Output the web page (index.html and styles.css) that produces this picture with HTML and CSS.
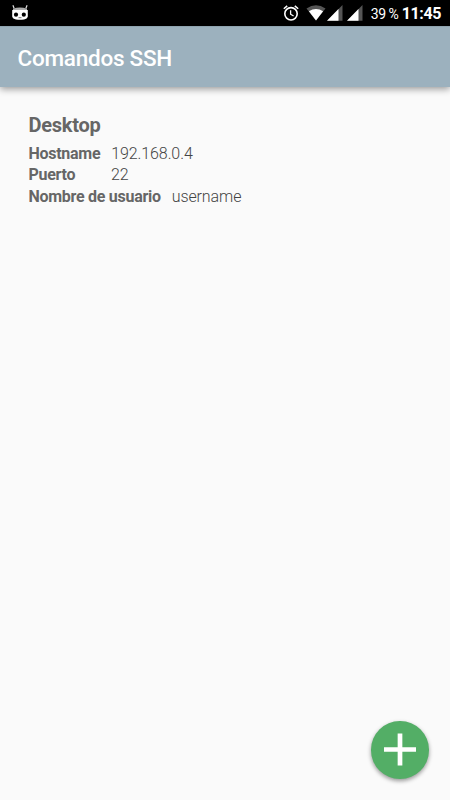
FILE: index.html
```html
<!DOCTYPE html>
<html lang="es">
    <head>
        <meta charset="UTF-8">
        <meta name="viewport" content="width=device-width, initial-scale=1.0">
        <title>Comandos SSH</title>
        <link rel="stylesheet" href="styles.css">
    </head>
    <body>
        <div class="statusbar">
            <svg class="robot" width="18" height="16" viewBox="0 0 18 16">
                <path d="M1.9 0.3L3.2 3.5M16.1 0.3L14.8 3.5" stroke="#ddd" stroke-width="1.2"/>
                <path d="M2 3.8Q9 1.2 16 3.8V6H2z" fill="#aaa"/>
                <path d="M1.2 5H16.8V11.5Q16.3 14 13 14.4Q9 15 5 14.4Q1.7 14 1.2 11.5z" fill="#fff"/>
                <circle cx="5" cy="9.7" r="2.1"/>
                <circle cx="12.8" cy="9.7" r="2.1"/>
                <path d="M7.5 12.7H10.5" stroke="#777" stroke-width="1"/>
            </svg>
            <div class="status-right">
                <svg class="alarm" width="16" height="16" viewBox="0 0 16 16" fill="none" stroke="#fff">
                    <circle cx="8" cy="8.8" r="6.2" stroke-width="1.6"/>
                    <path d="M0.8 3.8L4.2 0.9M15.2 3.8L11.8 0.9" stroke-width="1.5"/>
                    <path d="M7.6 5.2V9.2L10.6 11" stroke-width="1.3"/>
                </svg>
                <svg class="wifi" width="20" height="16" viewBox="0 0 20 16">
                    <path d="M0.5 3.5Q10 -3 19.5 3.5L10 15.5z" fill="#555"/>
                    <path d="M2.9 6.3Q10 1.8 17.1 6.3L10 15.5z" fill="#fff"/>
                </svg>
                <svg class="signal" width="16" height="16" viewBox="0 0 16 16">
                    <path d="M0 15.7L15.5 0V15.7z" fill="#555"/>
                    <path d="M0 15.7L11.5 4V15.7z" fill="#fff"/>
                </svg>
                <svg class="signal" width="16" height="16" viewBox="0 0 16 16">
                    <path d="M0 15.7L15.5 0V15.7z" fill="#555"/>
                    <path d="M0 15.7L11.5 4V15.7z" fill="#fff"/>
                </svg>
                <span class="battery">39 %</span>
                <span class="clock">11:45</span>
            </div>
        </div>
        <header class="toolbar">
            <h1>Comandos SSH</h1>
        </header>
        <main class="card">
            <h2>Desktop</h2>
            <div class="row">
                <span class="label">Hostname</span>
                <span class="value">192.168.0.4</span>
            </div>
            <div class="row">
                <span class="label">Puerto</span>
                <span class="value">22</span>
            </div>
            <div class="row">
                <span class="label">Nombre de usuario</span>
                <span class="value">username</span>
            </div>
        </main>
        <button class="fab" aria-label="Agregar">
            <svg width="32" height="34" viewBox="0 0 32 34">
                <path d="M0 16.5H32M16 0.5V32.5" stroke="#fff" stroke-width="4.7"/>
            </svg>
        </button>
    </body>
</html>
```
FILE: styles.css
```css
* {
    box-sizing: border-box;
}
body {
    margin: 0;
    height: 800px;
    overflow: hidden;
    background-color: #fafafa;
    font-family: Roboto, sans-serif;
    color: #666;
}
.statusbar {
    display: flex;
    justify-content: space-between;
    height: 26px;
    padding: 5px 9px 0 11px;
    background-color: #000;
    color: #fff;
}
.status-right {
    display: flex;
}
.wifi {
    margin-left: 6.5px;
}
.signal {
    margin-left: 1px;
}
.signal + .signal {
    margin-left: 4.5px;
}
.battery {
    margin-left: 7.5px;
    font-size: 14px;
    line-height: 18px;
    letter-spacing: -0.5px;
}
.clock {
    margin-left: 3.5px;
    font-size: 16px;
    font-weight: bold;
    line-height: 18px;
    letter-spacing: -0.4px;
}
.toolbar {
    display: flex;
    align-items: center;
    height: 61px;
    padding: 2px 17px 0 17.5px;
    border-top: 1px solid #8fa3af;
    background-color: #9cb1be;
    box-shadow: 0 2px 7px rgba(0, 0, 0, 0.4);
    color: #fff;
}
.toolbar h1 {
    margin: 0;
    font-size: 22.5px;
    font-weight: 500;
    letter-spacing: -0.25px;
}
.card {
    padding: 25px 28.5px;
}
.card h2 {
    margin: 0 0 5px;
    font-size: 20px;
    line-height: 26px;
    letter-spacing: -0.25px;
}
.row {
    display: flex;
    font-size: 16px;
    line-height: 21.3px;
}
.label {
    min-width: 71.5px;
    margin-right: 11px;
    font-weight: bold;
    letter-spacing: -0.28px;
}
.value {
    font-weight: 300;
    letter-spacing: -0.1px;
    color: #444;
}
.fab {
    position: absolute;
    right: 21.5px;
    bottom: 21.5px;
    display: flex;
    align-items: center;
    justify-content: center;
    width: 57.5px;
    height: 57.5px;
    padding: 0;
    border: none;
    border-radius: 50%;
    background-color: #53ae66;
    box-shadow: 0 2px 4px rgba(0, 0, 0, 0.4);
}
```
